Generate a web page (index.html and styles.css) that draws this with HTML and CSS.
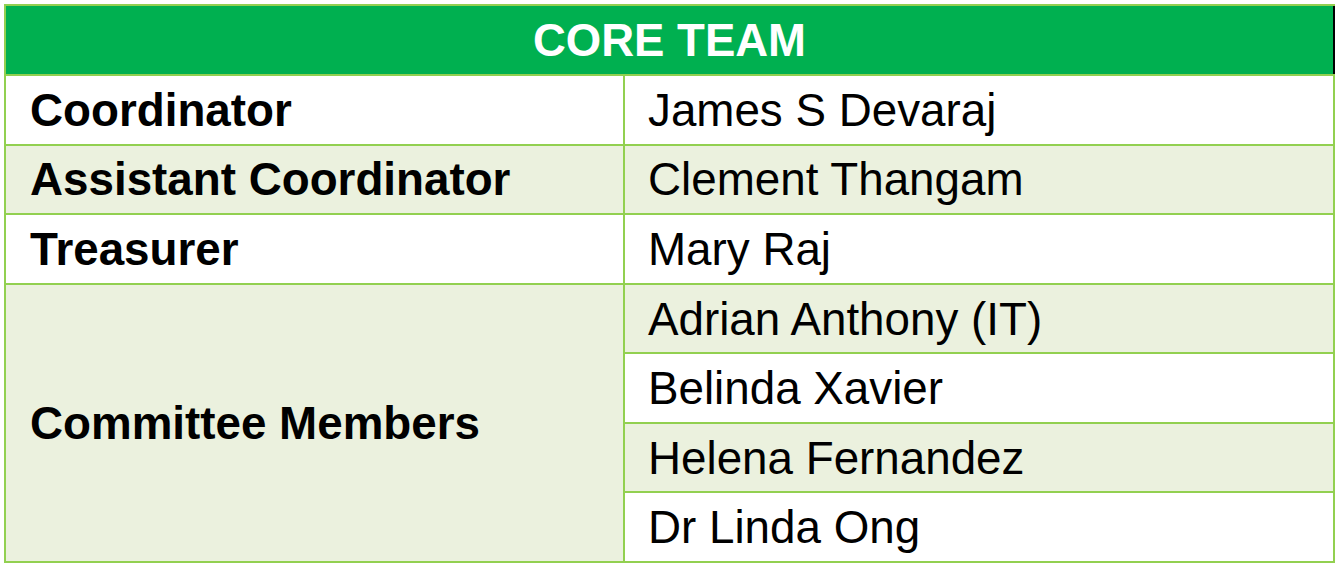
FILE: index.html
```html
<!DOCTYPE html>
<html lang="en">
<head>
<meta charset="utf-8">
<title>Core Team</title>
<link rel="stylesheet" href="styles.css">
</head>
<body>
<div class="team">
  <div class="cell head">CORE TEAM</div>
  <div class="cell role">Coordinator</div>
  <div class="cell name">James S Devaraj</div>
  <div class="cell role band">Assistant Coordinator</div>
  <div class="cell name band">Clement Thangam</div>
  <div class="cell role">Treasurer</div>
  <div class="cell name">Mary Raj</div>
  <div class="cell role band span4">Committee Members</div>
  <div class="cell name band">Adrian Anthony (IT)</div>
  <div class="cell name">Belinda Xavier</div>
  <div class="cell name band">Helena Fernandez</div>
  <div class="cell name">Dr Linda Ong</div>
</div>
</body>
</html>
```

FILE: styles.css
```css
html, body {
  margin: 0;
  padding: 0;
  background: #ffffff;
}

body {
  padding: 4px 0 0 4px;
  font-family: "Liberation Sans", Arial, sans-serif;
  color: #000000;
}

.team {
  display: grid;
  grid-template-columns: 617px 708px;
  grid-template-rows: 68px repeat(7, 67.57px);
  gap: 2px;
  padding: 2px;
  background: #92d050;
  width: max-content;
}

.cell {
  display: flex;
  align-items: center;
  padding-top: 2px;
  background: #ffffff;
  font-size: 45.75px;
  line-height: 1;
  white-space: nowrap;
}

.head {
  grid-column: 1 / -1;
  justify-content: center;
  background: #00b050;
  color: #ffffff;
  font-weight: bold;
  font-size: 45.5px;
  margin-right: -2px;
  border-right: 2px solid #000000;
}

.role {
  font-weight: bold;
  padding-left: 24px;
}

.name {
  padding-left: 23px;
}

.band {
  background: #ebf1de;
}

.span4 {
  grid-row: span 4;
}
```
